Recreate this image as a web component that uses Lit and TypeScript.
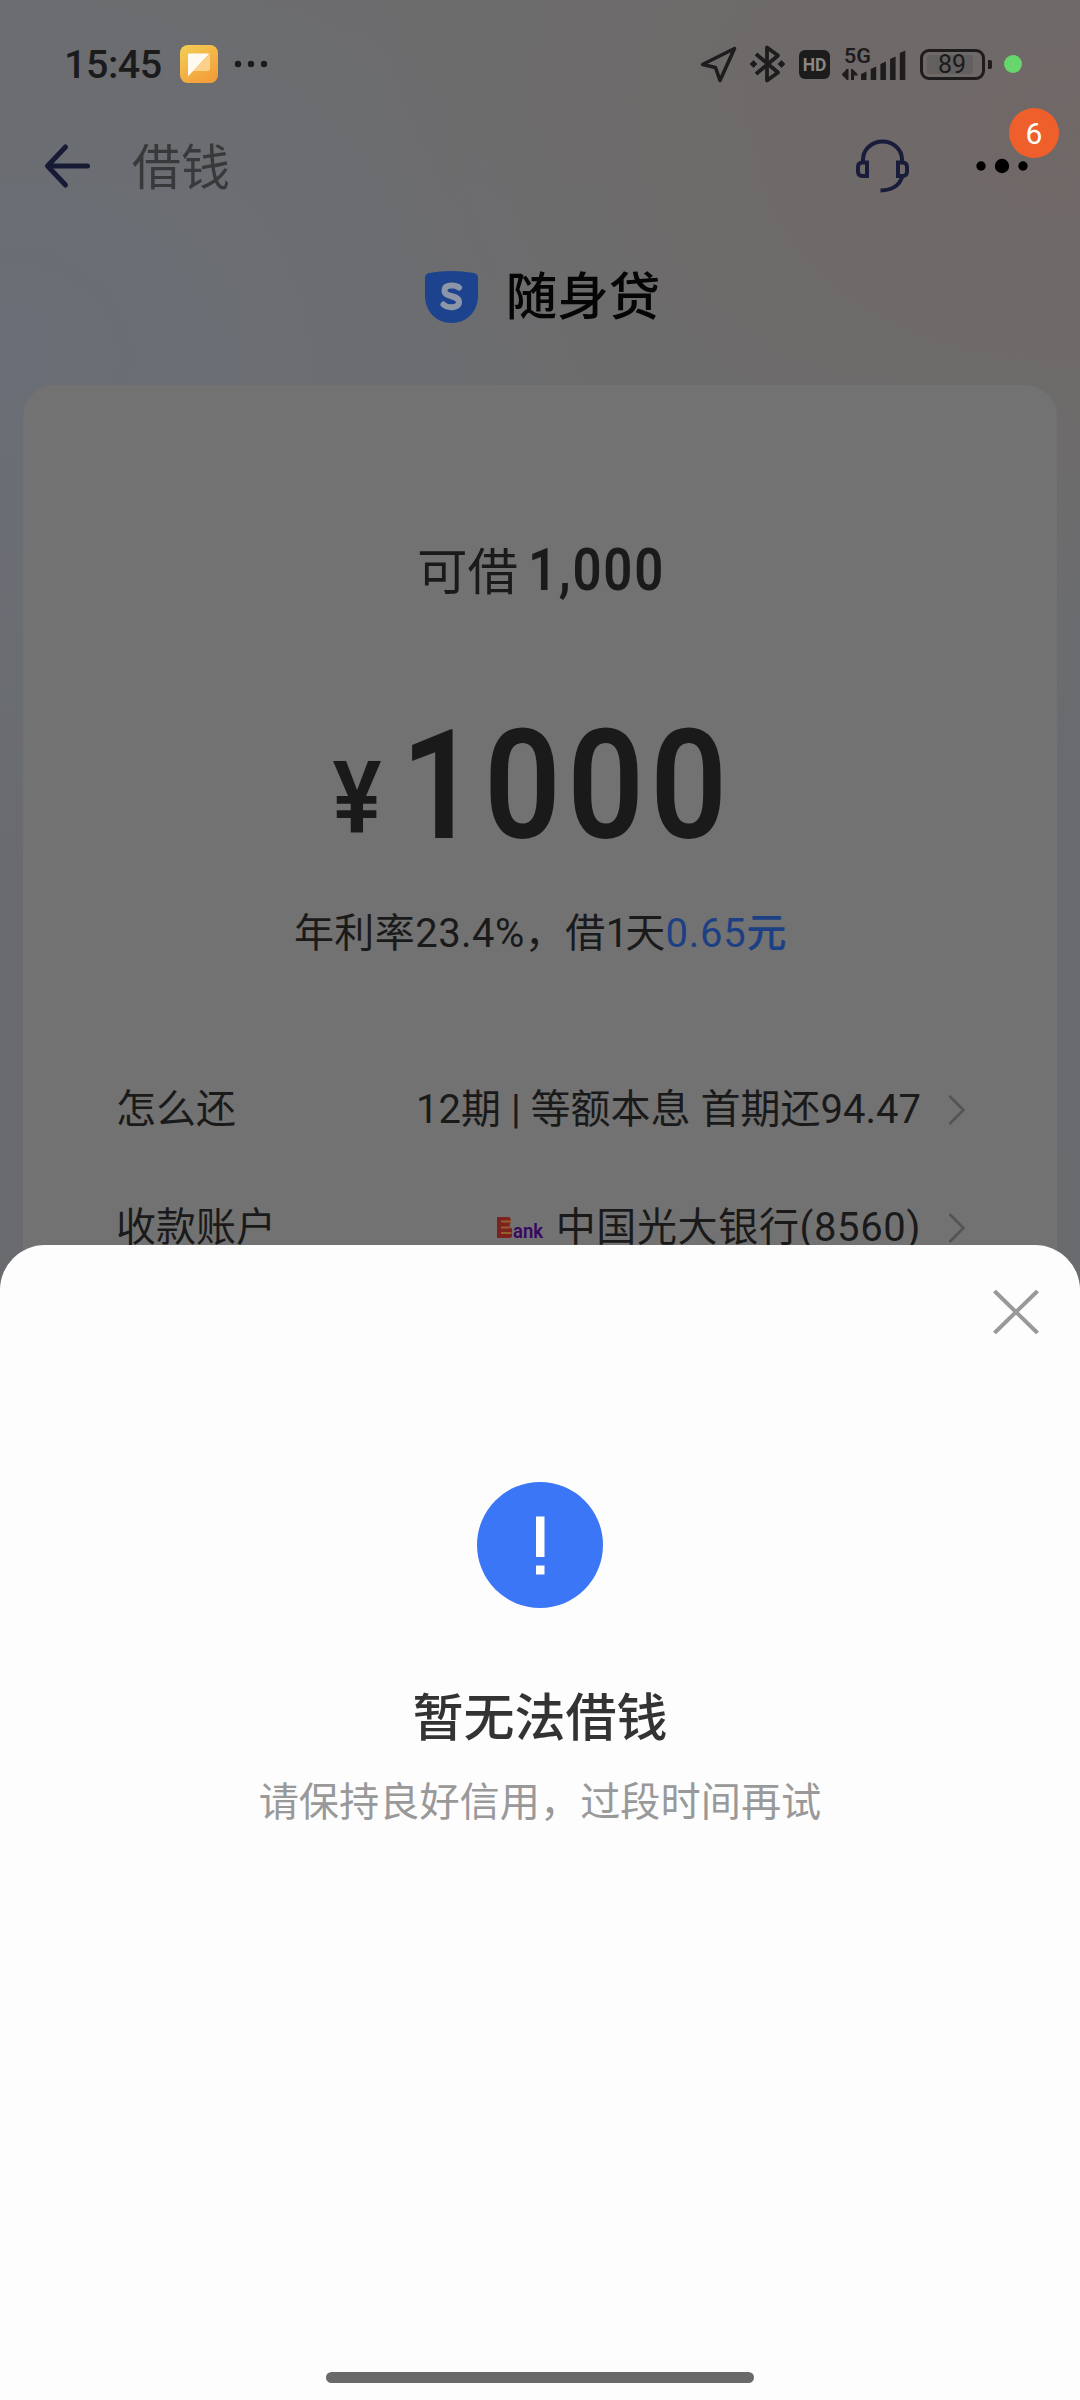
import { LitElement, html, css, svg } from "lit";
import { customElement } from "lit/decorators.js";

const SIGNAL_HEIGHTS = [8, 13, 18, 23, 29];

@customElement("status-bar")
class StatusBar extends LitElement {
  static styles = css`
    :host { display: flex; height: 128px; align-items: center; justify-content: space-between; padding: 0 58px 0 64px; color: #1b1b1b; box-sizing: border-box; }
    .side { display: flex; align-items: center; }
    .time { font-size: 39.500px; line-height: 48px; font-weight: 500; letter-spacing: -0.5px; width: 116px; padding-top: 1px; }
    svg { display: block; overflow: visible; }
    .app { margin-right: 17px; }
    .gps { margin-right: 13px; }
    .bt { margin-right: 14px; }
    .hd { width: 31px; height: 29px; margin-right: 12px; border-radius: 6px; background: #1d1c1c; color: #8a8786; font-size: 17.500px; line-height: 30px; font-weight: 700; text-align: center; }
    .signal { margin-right: 14px; }
    .battery { display: flex; align-items: center; margin-right: 12px; }
    .cell { box-sizing: border-box; width: 65px; height: 31px; border: 3px solid #1e1c1c; border-radius: 9px; padding: 3px 4px; }
    .level { width: 46px; height: 19px; border-radius: 2px; background: #625f5e; font-size: 25px; line-height: 20px; text-align: center; text-indent: 4px; }
    .tip { width: 4px; height: 9px; margin-left: 3px; border-radius: 0 2px 2px 0; background: #1e1c1c; }
    .live { width: 18px; height: 18px; border-radius: 50%; background: #67d66c; }
  `;
  render() {
    return html`
      <div class="side">
        <div class="time">15:45</div>
        <svg class="app" width="38" height="38" viewBox="0 0 38 38">
          <defs>
            <linearGradient id="g" x1="0" y1="0" x2="0.6" y2="1"><stop offset="0" stop-color="#f3cf55" /><stop offset="1" stop-color="#f3a03b" /></linearGradient>
          </defs>
          <rect width="38" height="38" rx="8" fill="url(#g)" />
          <path d="M30 9V24Q30 26 28 26H13Z" fill="#fbd08a" />
          <path d="M9 8.500H29.500L8 31.500V9.500Q8 8.500 9 8.500Z" fill="#fffaf0" />
        </svg>
        <svg width="34" height="8" viewBox="0 0 34 8" fill="#1b1b1b"><circle cx="3" cy="4" r="3.200" /><circle cx="16" cy="4" r="3.200" /><circle cx="29" cy="4" r="3.200" /></svg>
      </div>
      <div class="side">
        <svg class="gps" width="37" height="37" viewBox="0 0 37 37" fill="none" stroke="#1e1c1c" stroke-width="3.600" stroke-linejoin="round">
          <path d="M34.500 2.500L2.500 18.500L15.500 21.500L20 34.500Z" />
        </svg>
        <svg class="bt" width="35" height="38" viewBox="0 0 35 38" fill="none" stroke="#1e1c1c" stroke-width="3.800" stroke-linejoin="round">
          <path d="M6 9L28 27.500L17 35.500V2.500L28 10.500L6 29" />
          <path d="M3.500 15.500L7 19L3.500 22.500L0 19ZM31.500 15.500L35 19L31.500 22.500L28 19Z" fill="#1e1c1c" stroke="#1e1c1c" stroke-width="0.800" />
        </svg>
        <div class="hd">HD</div>
        <svg class="signal" width="64" height="38" viewBox="0 0 64 38" fill="#1e1c1c">
          <text x="2" y="18" font-size="21" font-weight="600" textLength="27" lengthAdjust="spacingAndGlyphs">5G</text>
          <path d="M0 29L4 25V24H6.500V35H5L0 30ZM9 24H10.500L15.500 29V30.500H12V35H9Z" />
          ${SIGNAL_HEIGHTS.map((h, i) => svg`<path d=${`M${19 + i * 9.700} ${37 - h}L${24.500 + i * 9.700} ${34.500 - h}V35H${19 + i * 9.700}Z`} />`)}
        </svg>
        <div class="battery">
          <div class="cell"><div class="level">89</div></div>
          <div class="tip"></div>
        </div>
        <div class="live"></div>
      </div>`;
  }
}

@customElement("nav-bar")
class NavBar extends LitElement {
  static styles = css`
    :host { display: flex; height: 76px; align-items: center; padding: 0 50px 0 45px; box-sizing: border-box; }
    svg { display: block; overflow: visible; }
    .title { flex: 1; margin-left: 42px; padding-top: 5px; font-size: 49px; line-height: 60px; font-weight: 400; color: #38393b; }
    .agent { margin-right: 67px; }
    .menu { position: relative; }
    .badge { position: absolute; left: 33px; top: -50px; width: 50px; height: 50px; border-radius: 50%; background: #ef5f2b; color: #fff; font-size: 30px; line-height: 52px; text-align: center; }
  `;
  render() {
    return html`
      <svg width="45" height="44" viewBox="0 0 45 44" fill="none" stroke="#171a35" stroke-width="5" stroke-linecap="round" stroke-linejoin="round">
        <path d="M42.500 22H3M20.500 3L2.500 22L20.500 41" />
      </svg>
      <div class="title">借钱</div>
      <svg class="agent" width="53" height="53" viewBox="0 0 53 53" fill="none" stroke="#191c3a" stroke-width="4">
        <path d="M7 21V19.500A19.500 18 0 0 1 46 19.500V21M46 37Q42 50 24.500 50.500" />
        <path d="M11 22.500V36H6.500Q2 36 2 31.500V27Q2 22.500 6.500 22.500ZM42 22.500V36H46.500Q51 36 51 31.500V27Q51 22.500 46.500 22.500Z" />
      </svg>
      <div class="menu">
        <svg width="54" height="16" viewBox="0 0 54 16"><circle cx="5" cy="8" r="4.700" /><circle cx="26" cy="8" r="7.200" /><circle cx="47" cy="8" r="4.700" /></svg>
        <div class="badge">6</div>
      </div>`;
  }
}

@customElement("loan-card")
class LoanCard extends LitElement {
  static styles = css`
    :host { display: flex; flex-direction: column; margin: 0 23px; padding: 155px 92px 0 93px; height: 1000px; border-radius: 32px; background: #727272; color: #1a1a1a; box-sizing: border-box; }
    .quota { display: flex; align-items: baseline; height: 60px; line-height: 60px; font-size: 50.500px; padding-left: 301px; }
    .quota b { margin-left: 10px; font-size: 60px; font-weight: 600; letter-spacing: 2px; transform: scaleX(0.85); transform-origin: left; }
    .amount { display: flex; align-items: baseline; height: 160px; line-height: 160px; margin-top: 106px; padding-left: 206px; font-weight: 600; }
    .yen { position: relative; top: -6px; width: 70px; text-align: center; font-size: 100px; transform: scaleX(0.92); }
    .figure { font-size: 153px; letter-spacing: 7px; margin-left: 9px; transform: scaleX(0.88); transform-origin: left; }
    .rate { height: 60px; line-height: 60px; margin-top: 38px; text-align: center; font-size: 40px; letter-spacing: 0.45px; white-space: nowrap; }
    .rate i { font-style: normal; letter-spacing: -3px; }
    .rate span { color: #1d3f83; font-weight: 450; letter-spacing: 0.7px; }
    .rows { display: flex; flex-direction: column; margin-top: 87px; }
    .row { display: flex; align-items: center; height: 118px; font-size: 40px; line-height: 60px; white-space: nowrap; }
    .label { flex: 1; }
    .plan { letter-spacing: 0; }
    .account { letter-spacing: 0.65px; }
    .bank { margin-right: 13px; }
    .chev { margin-left: 27px; }
    svg { display: block; overflow: visible; }
  `;
  private chevron() {
    return html`<svg class="chev" width="17" height="28" viewBox="0 0 17 28" fill="none" stroke="#545454" stroke-width="2.500"><path d="M1.500 0L15.500 14L1.500 28" /></svg>`;
  }
  render() {
    return html`
      <div class="quota">可借<b>1,000</b></div>
      <div class="amount"><span class="yen">¥</span><span class="figure">1000</span></div>
      <div class="rate">年利率23.4%，借<i>1</i>天<span>0.65元</span></div>
      <div class="rows">
        <div class="row"><div class="label">怎么还</div><div class="plan">12期 | 等额本息 首期还94.47</div>${this.chevron()}</div>
        <div class="row">
          <div class="label">收款账户</div>
          <svg class="bank" width="46" height="22" viewBox="0 0 46 22">
            <path d="M0 0H12.500L14 3L12.500 9.500L15 12V20L13 21H0Z" fill="#7c2320" />
            <path d="M4 4.500H14M4 10.500H13M4 16H14.500" stroke="#94602d" stroke-width="2.200" />
            <text x="16" y="20.500" font-size="20" font-weight="600" fill="#390763" textLength="30" lengthAdjust="spacingAndGlyphs">ank</text>
          </svg>
          <div class="account">中国光大银行(8560)</div>${this.chevron()}
        </div>
      </div>`;
  }
}

@customElement("notice-sheet")
class NoticeSheet extends LitElement {
  static styles = css`
    :host { position: absolute; left: 0; right: 0; bottom: 0; height: 1155px; display: flex; flex-direction: column; align-items: center; border-radius: 45px 45px 0 0; background: #fdfdfd; box-sizing: border-box; padding: 45px 0 17px; }
    svg { display: block; }
    .close { align-self: flex-end; margin-right: 41px; }
    .alert { margin-top: 148px; }
    .title { margin-top: 80px; font-size: 51px; line-height: 62px; font-weight: 500; color: #333; }
    .hint { margin-top: 23px; font-size: 40.200px; line-height: 60px; color: #999; }
    .home { margin-top: auto; width: 428px; height: 11px; border-radius: 6px; background: #696969; }
  `;
  render() {
    return html`
      <svg class="close" width="46" height="44" viewBox="0 0 46 44" stroke="#999" stroke-width="4"><path d="M1.500 1L44.500 43M44.500 1L1.500 43" /></svg>
      <svg class="alert" width="126" height="126" viewBox="0 0 126 126">
        <circle cx="63" cy="63" r="63" fill="#3a76f5" />
        <path d="M59 34.500H67.500V75H59ZM59 83.500H67.500V92.500H59Z" fill="#fff" />
      </svg>
      <div class="title">暂无法借钱</div>
      <div class="hint">请保持良好信用，过段时间再试</div>
      <div class="home"></div>`;
  }
}

@customElement("app-root")
class AppRoot extends LitElement {
  static styles = css`
    :host { display: block; position: relative; width: 1080px; height: 2400px; overflow: hidden; font-family: Roboto, "Noto Sans CJK SC", sans-serif;
      background: radial-gradient(700px 500px at 1080px 130px, #706867 0%, rgba(112, 104, 103, 0) 100%), radial-gradient(600px 500px at 0 360px, #6a6e76 0%, rgba(106, 110, 118, 0) 100%), linear-gradient(180deg, #6c6c6d 0, #6c6d6e 400px, #696b70 800px, #696b6f 1300px); }
    .brand { display: flex; justify-content: center; align-items: center; height: 181px; padding: 4px 0 0 5px; box-sizing: border-box; }
    .brand svg { display: block; margin-right: 28px; }
    .name { font-size: 51.500px; line-height: 60px; padding-top: 3px; color: #050505; font-weight: 500; }
  `;
  render() {
    return html`
      <status-bar></status-bar>
      <nav-bar></nav-bar>
      <div class="brand">
        <svg width="53" height="52" viewBox="0 0 53 52">
          <path d="M0 6.500Q0 3 4 2Q26 -2 49 2Q53 3 53 6.500V25C53 40 42 52 26.500 52S0 40 0 25Z" fill="#1d438f" />
          <path d="M34 16.500C31 14 19.500 12.500 19.500 19.500C19.500 27 34 23.500 34 31C34 38 22 37 18.500 33.500" fill="none" stroke="#8d96a8" stroke-width="6" stroke-linecap="round" />
        </svg>
        <div class="name">随身贷</div>
      </div>
      <loan-card></loan-card>
      <notice-sheet></notice-sheet>`;
  }
}
